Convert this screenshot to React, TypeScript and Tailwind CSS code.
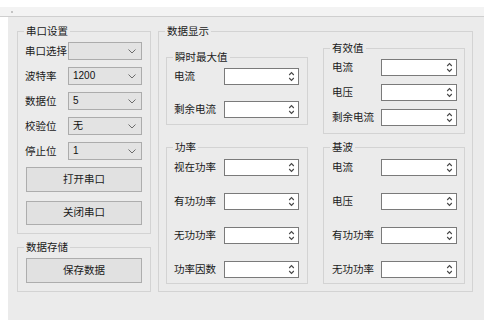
const font = "font-['Liberation_Sans','Noto_Sans_CJK_SC',sans-serif]";

function Chevron() {
  return (
    <svg width="8" height="5" viewBox="0 0 8 5" className="shrink-0">
      <path d="M0.5 0.5 L4 4 L7.5 0.5" fill="none" stroke="#6b6b6b" strokeWidth="1" />
    </svg>
  );
}

function SpinArrows() {
  return (
    <svg width="7" height="13" viewBox="0 0 7 13" className="shrink-0">
      <path d="M1.2 5 L3.5 2.6 L5.8 5" fill="none" stroke="#444" strokeWidth="1.1" />
      <path d="M1.2 8 L3.5 10.4 L5.8 8" fill="none" stroke="#444" strokeWidth="1.1" />
    </svg>
  );
}

function Combo(props: { value: string }) {
  return (
    <div className="w-[74px] h-[18px] bg-[#e3e3e3] border border-[#acacac] flex items-center justify-between pl-[4px] pr-[5px]">
      <span className="text-[10px] leading-none text-[#111]">{props.value}</span>
      <Chevron />
    </div>
  );
}

function Spin(props: { w: number }) {
  return (
    <div
      className={`h-[17px] bg-white border border-[#7a7a7a] flex items-center justify-end pr-[3px] ${props.w === 76 ? "w-[76px]" : "w-[75px]"}`}
    >
      <SpinArrows />
    </div>
  );
}

function SpinRow(props: { label: string; labelW: number; spinW: number }) {
  return (
    <div className="flex items-center h-[17px]">
      <div className={`${props.labelW === 49 ? "w-[49px]" : "w-[50px]"} whitespace-nowrap text-[10.5px] leading-none text-[#1a1a1a]`}>{props.label}</div>
      <Spin w={props.spinW} />
    </div>
  );
}

function Legend(props: { text: string }) {
  return <legend className="ml-[6px] px-[2px] text-[10.5px] leading-[14px] text-[#1a1a1a] whitespace-nowrap">{props.text}</legend>;
}

function Button(props: { text: string; h: string }) {
  return (
    <div className={`ml-[8px] w-[116px] ${props.h} bg-[#e1e1e1] border border-[#adadad] flex items-center justify-center text-[10.5px] text-[#1a1a1a]`}>
      {props.text}
    </div>
  );
}

export default function App() {
  const serial: [string, string][] = [
    ["串口选择", ""],
    ["波特率", "1200"],
    ["数据位", "5"],
    ["校验位", "无"],
    ["停止位", "1"],
  ];

  return (
    <div className={`w-[495px] h-[327px] bg-white ${font}`}>
      <div className="h-[7px]" />
      <div className="h-[10px] w-[484px] bg-[#f3f3f3] border-b border-[#cfcfcf] flex items-center pl-[11px]">
        <div className="w-[2px] h-[2px] bg-[#c4c4c4]" />
      </div>
      <div className="ml-[8px] w-[476px] h-[303px] bg-[#ebebeb] flex">
        {/* left column */}
        <div className="ml-[9px] w-[134px] flex flex-col">
          <fieldset className="mt-[7px] h-[210px] min-w-0 border border-[#d3d3d3]">
            <Legend text="串口设置" />
            <div className="mt-[4px] flex flex-col gap-[7px]">
              {serial.map(([label, value], i) => (
                <div key={i} className="flex items-center h-[18px] pl-[7px]">
                  <div className="w-[43px] whitespace-nowrap text-[10.5px] leading-none text-[#1a1a1a]">{label}</div>
                  <Combo value={value} />
                </div>
              ))}
            </div>
            <div className="mt-[7px]">
              <Button text="打开串口" h="h-[25px]" />
            </div>
            <div className="mt-[9px]">
              <Button text="关闭串口" h="h-[24px]" />
            </div>
          </fieldset>

          <fieldset className="mt-[6px] h-[52px] min-w-0 border border-[#d3d3d3]">
            <Legend text="数据存储" />
            <div className="mt-[4px]">
              <Button text="保存数据" h="h-[25px]" />
            </div>
          </fieldset>
        </div>

        {/* data display */}
        <fieldset className="ml-[7px] mt-[7px] w-[315px] h-[268px] min-w-0 border border-[#d3d3d3]">
          <Legend text="数据显示" />
          <div className="flex ml-[7px] gap-[15px]">
            <div className="w-[142px] flex flex-col">
              <fieldset className="mt-[12px] h-[75px] min-w-0 border border-[#d3d3d3]">
                <Legend text="瞬时最大值" />
                <div className="mt-[4px] pl-[7px] flex flex-col gap-[16px]">
                  <SpinRow label="电流" labelW={50} spinW={75} />
                  <SpinRow label="剩余电流" labelW={50} spinW={75} />
                </div>
              </fieldset>
              <fieldset className="mt-[15px] h-[144px] min-w-0 border border-[#d3d3d3]">
                <Legend text="功率" />
                <div className="mt-[5px] pl-[7px] flex flex-col gap-[17px]">
                  <SpinRow label="视在功率" labelW={50} spinW={75} />
                  <SpinRow label="有功功率" labelW={50} spinW={75} />
                  <SpinRow label="无功功率" labelW={50} spinW={75} />
                  <SpinRow label="功率因数" labelW={50} spinW={75} />
                </div>
              </fieldset>
            </div>

            <div className="w-[142px] flex flex-col">
              <fieldset className="mt-[3px] h-[93px] min-w-0 border border-[#d3d3d3]">
                <Legend text="有效值" />
                <div className="mt-[4px] pl-[8px] flex flex-col gap-[8px]">
                  <SpinRow label="电流" labelW={49} spinW={76} />
                  <SpinRow label="电压" labelW={49} spinW={76} />
                  <SpinRow label="剩余电流" labelW={49} spinW={76} />
                </div>
              </fieldset>
              <fieldset className="mt-[6px] h-[144px] min-w-0 border border-[#d3d3d3]">
                <Legend text="基波" />
                <div className="mt-[5px] pl-[8px] flex flex-col gap-[17px]">
                  <SpinRow label="电流" labelW={49} spinW={76} />
                  <SpinRow label="电压" labelW={49} spinW={76} />
                  <SpinRow label="有功功率" labelW={49} spinW={76} />
                  <SpinRow label="无功功率" labelW={49} spinW={76} />
                </div>
              </fieldset>
            </div>
          </div>
        </fieldset>
      </div>
    </div>
  );
}
